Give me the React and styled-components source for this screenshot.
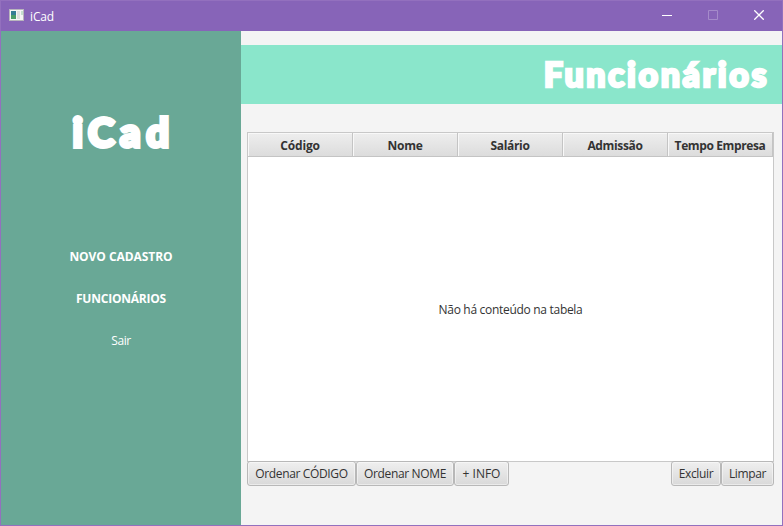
import React from "react";
import styled, { createGlobalStyle } from "styled-components";

const GlobalStyle = createGlobalStyle`
  * { box-sizing: border-box; }
  body { margin: 0; overflow: hidden; }
  button { font: inherit; color: inherit; }
`;

const Window = styled.div`
  width: 783px;
  height: 526px;
  display: flex;
  flex-direction: column;
  border: 1px solid #9370be;
  background: #f4f4f4;
  color: #333;
  font: 12px/16px "Open Sans", "Noto Sans", sans-serif;
`;

const TitleBar = styled.header`
  height: 30px;
  flex: none;
  display: flex;
  align-items: center;
  padding-left: 8px;
  background: #8764b8;
  color: #fff;
`;

const AppIcon = styled.svg`
  width: 16px;
  height: 14px;
  margin-bottom: 2px;
`;

const WindowTitle = styled.span`
  flex: 1;
  margin-left: 5px;
  padding-top: 1px;
  letter-spacing: -0.15px;
`;

const Controls = styled.div`
  display: flex;
  height: 30px;
`;

const Control = styled.button`
  width: 46px;
  padding: 0 0 2px;
  border: 0;
  background: none;
  display: grid;
  place-items: center;
  opacity: ${(p) => (p.disabled ? 0.25 : 1)};
`;

const Body = styled.div`
  flex: 1;
  display: flex;
  min-height: 0;
`;

const Sidebar = styled.nav`
  width: 240px;
  flex: none;
  display: flex;
  flex-direction: column;
  align-items: center;
  background: #69a896;
  color: #fff;
`;

const Logo = styled.h1`
  margin: 76px 0 92px;
  padding-left: 5px;
  height: 50px;
  font: 900 40px/50px Lato, sans-serif;
  letter-spacing: 5.6px;
  -webkit-text-stroke: 3.8px #fff;
`;

const NavItem = styled.a`
  height: 16px;
  margin-bottom: 26px;
  font-weight: ${(p) => (p.$strong ? 700 : 400)};
  letter-spacing: ${(p) => p.$spacing};
`;

const Content = styled.main`
  flex: 1;
  min-width: 0;
  display: flex;
  flex-direction: column;
`;

const Banner = styled.div`
  height: 59px;
  margin-top: 14px;
  padding: 0 13px 2px 0;
  display: flex;
  align-items: center;
  justify-content: flex-end;
  background: #8ae6cb;
`;

const Heading = styled.h2`
  margin: 0;
  color: #fff;
  font: 900 34px/50px Lato, sans-serif;
  letter-spacing: 2.55px;
  -webkit-text-stroke: 2.6px #fff;
`;

const Table = styled.section`
  width: 527px;
  height: 330px;
  margin: 28px 0 0 6px;
  display: flex;
  flex-direction: column;
  border: 1px solid #c8c8c8;
  background: #fff;
`;

const HeaderRow = styled.div`
  height: 24px;
  flex: none;
  display: grid;
  grid-template-columns: repeat(5, 105px);
  border-bottom: 1px solid #c4c4c4;
  background: linear-gradient(#eee, #dcdcdc);
`;

const HeaderCell = styled.div`
  display: flex;
  justify-content: center;
  align-items: center;
  padding-top: 2px;
  border-right: 1px solid #c4c4c4;
  box-shadow: inset 1px 1px #f8f8f8;
  font-weight: 700;
  letter-spacing: ${(p) => p.$spacing};
  white-space: nowrap;
`;

const Placeholder = styled.div`
  flex: 1;
  display: grid;
  place-items: center;
  padding-top: 2px;
  letter-spacing: -0.3px;
`;

const Actions = styled.div`
  width: 527px;
  margin: -1px 0 0 6px;
  display: flex;
`;

const ActionButton = styled.button`
  width: ${(p) => p.$width}px;
  height: 25px;
  padding: 0;
  margin-left: ${(p) => (p.$push ? "auto" : 0)};
  border: 1px solid #b8b8b8;
  border-radius: 3px;
  background: linear-gradient(#efefef, #d9d9d9);
  box-shadow: inset 0 0 0 1px rgba(255, 255, 255, 0.45);
  letter-spacing: ${(p) => p.$spacing};
  white-space: nowrap;
`;

const columns = [
  ["Código", "-0.15px"],
  ["Nome", "-0.3px"],
  ["Salário", "-0.3px"],
  ["Admissão", "-0.35px"],
  ["Tempo Empresa", "-0.38px"],
];

const actions = [
  { label: "Ordenar CÓDIGO", width: 109, spacing: "-0.35px" },
  { label: "Ordenar NOME", width: 98, spacing: "-0.35px" },
  { label: "+ INFO", width: 55, spacing: "0" },
  { label: "Excluir", width: 50, spacing: "-0.35px", push: true },
  { label: "Limpar", width: 53, spacing: "-0.35px" },
];

export default function App() {
  return (
    <>
      <GlobalStyle />
      <Window>
        <TitleBar>
          <AppIcon viewBox="0 0 16 14" shapeRendering="crispEdges">
            <path fill="#b8b5bd" d="M0 1h15v12H0z" />
            <path fill="#f5f5f5" d="M1 2h13v10H1z" />
            <path fill="#347c94" d="M2 3h5v8H2z" />
            <path fill="#4a9c69" d="M2 7h5v4H2z" />
            <path fill="#dedede" d="M8 3h3v8H8z" />
            <path fill="#c4dfcf" d="M12 3h2v4h-2z" />
          </AppIcon>
          <WindowTitle>iCad</WindowTitle>
          <Controls>
            <Control aria-label="Minimizar">
              <svg width="10" height="10"><path d="M0 5.5h10" stroke="#fff" /></svg>
            </Control>
            <Control aria-label="Maximizar" disabled>
              <svg width="10" height="10"><path d="M.5.5h9v9h-9z" fill="none" stroke="#fff" /></svg>
            </Control>
            <Control aria-label="Fechar">
              <svg width="10" height="10"><path d="m.3.3 9.4 9.4M9.7.3.3 9.7" stroke="#fff" strokeWidth="1.3" /></svg>
            </Control>
          </Controls>
        </TitleBar>
        <Body>
          <Sidebar>
            <Logo>iCad</Logo>
            <NavItem $strong $spacing="-0.05px">NOVO CADASTRO</NavItem>
            <NavItem $strong $spacing="-0.22px">FUNCIONÁRIOS</NavItem>
            <NavItem $spacing="-0.4px">Sair</NavItem>
          </Sidebar>
          <Content>
            <Banner>
              <Heading>Funcionários</Heading>
            </Banner>
            <Table>
              <HeaderRow>
                {columns.map(([name, spacing]) => (
                  <HeaderCell key={name} $spacing={spacing}>{name}</HeaderCell>
                ))}
              </HeaderRow>
              <Placeholder>Não há conteúdo na tabela</Placeholder>
            </Table>
            <Actions>
              {actions.map((a) => (
                <ActionButton key={a.label} $width={a.width} $spacing={a.spacing} $push={a.push}>
                  {a.label}
                </ActionButton>
              ))}
            </Actions>
          </Content>
        </Body>
      </Window>
    </>
  );
}
